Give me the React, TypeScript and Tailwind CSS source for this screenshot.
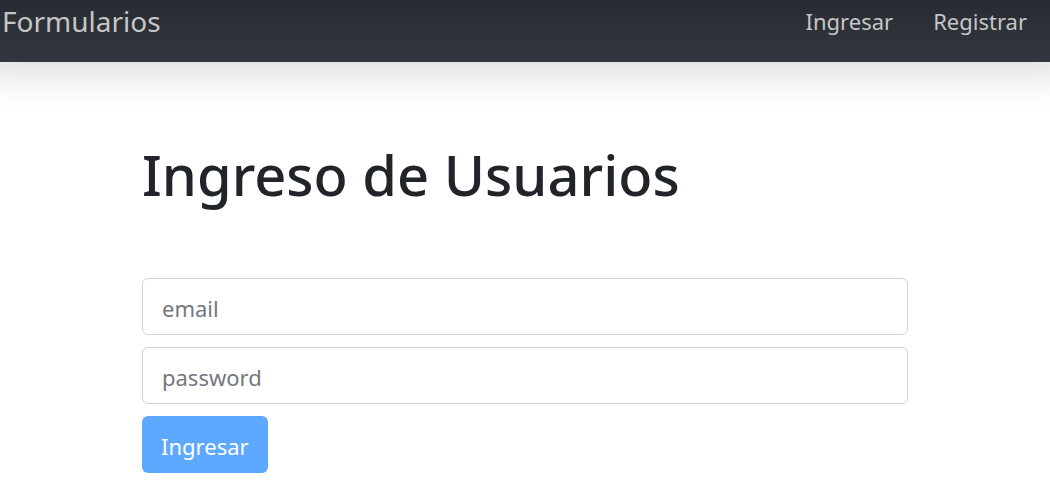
import React from "react";

const inputClass =
  "block h-[57px] w-full rounded-md border border-[#d0d1d6] bg-white px-[19px] pt-[2px] text-[22px] text-[#495057] outline-none placeholder:text-[#74777d] focus:border-[#80bdff]";

function Navbar() {
  return (
    <nav className="flex h-[62px] items-start justify-between bg-linear-to-b from-[#282c32] to-[#33363e] pl-[2px] pr-[23px] shadow-[0_-10px_36px_24px_rgba(0,0,0,0.13)]">
      <a href="#" className="text-[28px] leading-[42px] text-[#c5c6c8]">
        Formularios
      </a>
      <div className="flex gap-10 text-[22px] leading-[42px] text-[#c5c6c8]">
        <a href="#ingresar">Ingresar</a>
        <a href="#registrar">Registrar</a>
      </div>
    </nav>
  );
}

export default function App() {
  return (
    <div className="min-h-screen bg-white font-['Noto_Sans','Open_Sans',sans-serif]">
      <Navbar />
      <main className="mx-auto w-full max-w-[766px] pt-[76px]">
        <h1 className="text-[56px] font-medium leading-[72px] text-[#212529]">
          Ingreso de Usuarios
        </h1>
        <form className="mt-[68px] flex flex-col items-start gap-3" onSubmit={(e) => e.preventDefault()}>
          <input type="email" placeholder="email" aria-label="email" className={inputClass} />
          <input type="password" placeholder="password" aria-label="password" className={inputClass} />
          <button type="submit" className="h-[57px] rounded-md bg-[#5ca9ff] px-[19px] pt-1 text-[22px] text-white">
            Ingresar
          </button>
        </form>
      </main>
    </div>
  );
}
